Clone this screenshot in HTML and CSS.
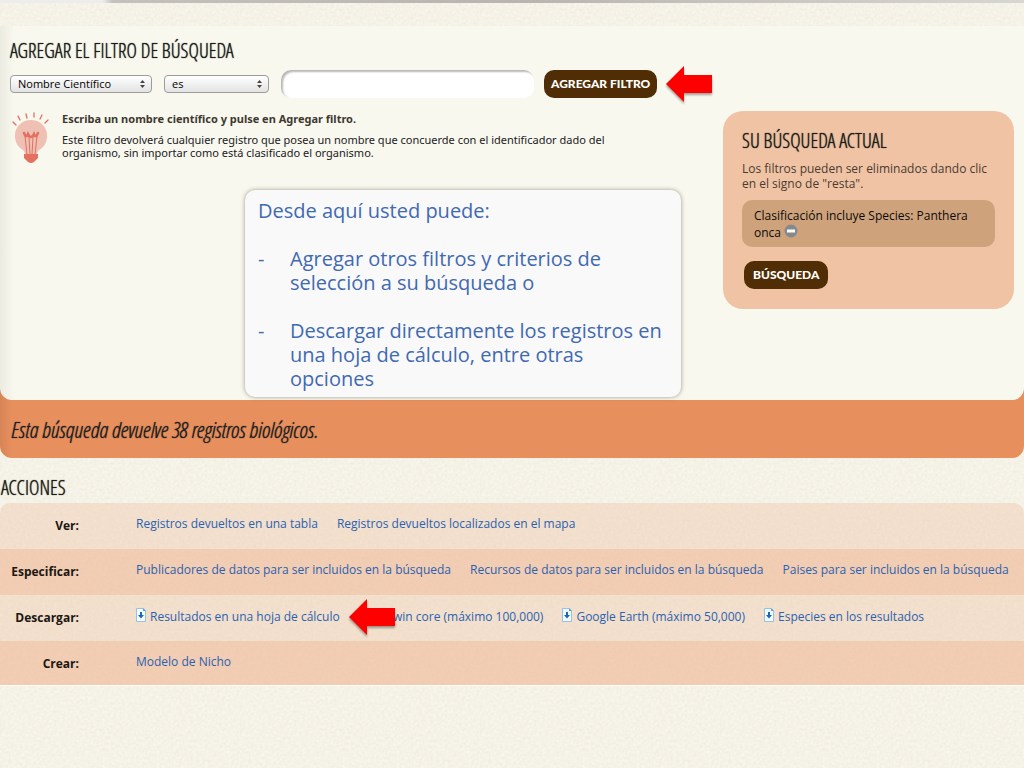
FILE: index.html
```html
<!DOCTYPE html>
<html lang="es">
<head>
<meta charset="utf-8">
<title>Agregar el filtro de búsqueda</title>
<link rel="stylesheet" href="styles.css">
</head>
<body>
<svg class="defs" aria-hidden="true">
  <symbol id="doc" viewBox="0 0 10 14">
    <path d="M.5 .5H7L9.500 3V13.500H.5Z" fill="#f4faff" stroke="#8fc3ea"/>
    <path d="M7 0V3H10Z" fill="#5b9fd6"/>
    <path d="M4 4H6V7H8L5 10.500L2 7H4Z" fill="#1b66b5"/>
  </symbol>
  <symbol id="arrow" viewBox="0 0 46 36">
    <path d="M0 18L18 0V9H46V27H18V36Z" fill="#fe0000"/>
  </symbol>
</svg>
<div class="strip"></div>
<main class="page">
  <div class="results">
    <section class="panel">
      <h2 class="title">AGREGAR EL FILTRO DE BÚSQUEDA</h2>
      <form class="filter">
        <select class="select select-field" aria-label="Campo"><option>Nombre Científico</option></select>
        <select class="select select-op" aria-label="Operador"><option>es</option></select>
        <input class="query" type="text" aria-label="Valor">
        <div class="submit">
          <button class="btn" type="button">AGREGAR FILTRO</button>
          <svg class="arrow arrow-filter" aria-hidden="true"><use href="#arrow"/></svg>
        </div>
      </form>
      <div class="body">
        <div class="tip">
          <svg class="bulb" viewBox="0 0 38 52" aria-hidden="true">
            <g stroke="#e4705f" stroke-width="1.300" stroke-linecap="round">
              <path d="M1 10L4 13M6 4L8 8M14 2L15 6M22 1V5M30 3L28 7M36 8L33 11"/>
            </g>
            <path d="M19 8a16 16 0 0 1 8 30q-2 2-2 4H13q0-2-2-4a16 16 0 0 1 8-30Z" fill="#efc0b4"/>
            <path d="M15 43L13 24M23 43L25 24M18 43L17 25M20 43L21 25" fill="none" stroke="#e4705f"/>
            <path d="M12 21q2 6 4 1q3 6 6 0q2 5 4-1" fill="none" stroke="#e4705f" stroke-width="2.500" stroke-linecap="round"/>
            <path d="M12 42H26V46L22 50Q19 52 16 50L12 46Z" fill="#e4705f"/>
          </svg>
          <div>
            <p class="lead">Escriba un nombre científico y pulse en Agregar filtro.</p>
            <p class="hint">Este filtro devolverá cualquier registro que posea un nombre que concuerde con el identificador dado del organismo, sin importar como está clasificado el organismo.</p>
          </div>
        </div>
        <aside class="current">
          <h2 class="title">SU BÚSQUEDA ACTUAL</h2>
          <p class="note">Los filtros pueden ser eliminados dando clic en el signo de "resta".</p>
          <div class="chip">Clasificación incluye Species: Panthera onca
            <button class="remove" type="button" aria-label="Quitar filtro"><svg viewBox="0 0 14 14"><circle cx="7" cy="7" r="6.500" fill="#85898b"/><path d="M3 5.500h8v3H3Z" fill="#fff"/></svg></button>
          </div>
          <button class="btn btn-search" type="button">BÚSQUEDA</button>
        </aside>
      </div>
      <div class="callout">
        <p>Desde aquí usted puede:</p>
        <ul class="callout-list">
          <li>Agregar otros filtros y criterios de selección a su búsqueda o</li>
          <li>Descargar directamente los registros en una hoja de cálculo, entre otras opciones</li>
        </ul>
      </div>
    </section>
    <p class="count">Esta búsqueda devuelve 38 registros biológicos.</p>
  </div>
  <section>
    <h2 class="title title-actions">ACCIONES</h2>
    <dl class="actions">
      <div class="row">
        <dt>Ver:</dt>
        <dd><a href="#">Registros devueltos en una tabla</a><a href="#">Registros devueltos localizados en el mapa</a></dd>
      </div>
      <div class="row">
        <dt>Especificar:</dt>
        <dd><a href="#">Publicadores de datos para ser incluidos en la búsqueda</a><a href="#">Recursos de datos para ser incluidos en la búsqueda</a><a href="#">Paises para ser incluidos en la búsqueda</a></dd>
      </div>
      <div class="row">
        <dt>Descargar:</dt>
        <dd>
          <a href="#"><svg class="doc"><use href="#doc"/></svg>Resultados en una hoja de cálculo</a>
          <a class="darwin" href="#"><svg class="doc"><use href="#doc"/></svg>Darwin core (máximo 100,000)<svg class="arrow arrow-sheet" aria-hidden="true"><use href="#arrow"/></svg></a>
          <a href="#"><svg class="doc"><use href="#doc"/></svg>Google Earth (máximo 50,000)</a>
          <a href="#"><svg class="doc"><use href="#doc"/></svg>Especies en los resultados</a>
        </dd>
      </div>
      <div class="row">
        <dt>Crear:</dt>
        <dd><a href="#">Modelo de Nicho</a></dd>
      </div>
    </dl>
  </section>
</main>
</body>
</html>
```
FILE: styles.css
```css
* { box-sizing: border-box; }

body {
  margin: 0;
  min-height: 100vh;
  background-color: #f8f5eb;
  background-image: url("data:image/svg+xml,%3Csvg xmlns='http://www.w3.org/2000/svg' width='240' height='240'%3E%3Cfilter id='n'%3E%3CfeTurbulence type='fractalNoise' baseFrequency='.35' numOctaves='3' stitchTiles='stitch'/%3E%3CfeColorMatrix values='0 0 0 0 .5 0 0 0 0 .45 0 0 0 0 .3 .22 0 0 0 -.06'/%3E%3C/filter%3E%3Crect width='240' height='240' filter='url(%23n)'/%3E%3C/svg%3E");
  color: #222;
  font: 12px/16px "Open Sans", "Noto Sans", sans-serif;
}

h2, p, dl, dd, ul { margin: 0; padding: 0; }

.defs { position: absolute; width: 0; height: 0; }

.strip {
  height: 3px;
  background: linear-gradient(90deg, #ededed 10%, #c4c1bd 11%, #b9b4b0 50%, #d8d6d2);
}

.page { padding-top: 23px; }

.title {
  color: #1c1c18;
  font: 300 20px/24px "Open Sans Condensed Light", "Liberation Sans Narrow", "DejaVu Sans Condensed", sans-serif;
  text-shadow: 0 0 1px #1c1c18;
}

.results {
  border-radius: 0 0 12px 12px;
  background: linear-gradient(90deg, rgba(90, 60, 30, .12), transparent 12px) #e88f5e;
}

.panel {
  position: relative;
  min-height: 374px;
  padding: 13px 10px 0;
  border-radius: 0 0 12px 12px;
  background: linear-gradient(90deg, #ebebe2, #f8f8ef 14px);
}

.filter {
  display: flex;
  align-items: center;
  gap: 12px;
  margin-top: 7px;
}

.select {
  height: 18px;
  padding: 0 7px;
  appearance: none;
  border: 1px solid #9c9c9a;
  border-radius: 4px;
  background: url("data:image/svg+xml,%3Csvg xmlns='http://www.w3.org/2000/svg' width='5' height='8'%3E%3Cpath d='M0 3L2.500 0L5 3ZM0 5L2.500 8L5 5Z' fill='%23444'/%3E%3C/svg%3E") no-repeat right 6px center, linear-gradient(#fff, #e3e3e3);
  color: #000;
  font: 500 11px/16px "Open Sans", sans-serif;
}

.select-field { width: 142px; }
.select-op { width: 105px; }

.query {
  width: 253px;
  height: 28px;
  padding: 0 12px;
  border: 0;
  border-radius: 10px;
  background: #fff;
  box-shadow: inset 2px 2px 2px #b8b8b6;
  font: inherit;
}

.submit { position: relative; margin-left: -2px; }

.btn {
  height: 28px;
  padding: 0 7px;
  border: 0;
  border-radius: 10px;
  background: #502d04;
  color: #fff;
  font: 900 12px/16px Lato, "Open Sans", sans-serif;
}

.arrow {
  position: absolute;
  width: 46px;
  height: 36px;
  filter: drop-shadow(0 2px 1px rgba(0, 0, 0, .35));
}

.arrow-filter { top: -4px; left: calc(100% + 9px); }

.body {
  display: flex;
  justify-content: space-between;
  align-items: flex-start;
  margin-top: 13px;
}

.tip {
  display: flex;
  gap: 12px;
  max-width: 620px;
  padding-left: 2px;
}

.bulb { flex: none; width: 38px; height: 52px; margin-top: 1px; }

.lead { color: #403830; font: 700 11px/15px "Noto Sans", "Open Sans", sans-serif; }
.hint { margin-top: 7px; color: #22201c; font: 11px/13px "Noto Sans", "Open Sans", sans-serif; }

.current {
  width: 291px;
  padding: 18px 19px 20px;
  border-radius: 20px;
  background: #f0c3a5;
}

.note { margin-top: 8px; color: #4a3c30; line-height: 15px; }

.chip {
  margin-top: 9px;
  padding: 7px 12px 6px;
  border-radius: 10px;
  background: #cea37c;
  color: #0c0a08;
  line-height: 17px;
}

.remove {
  width: 14px;
  height: 14px;
  padding: 0;
  border: 0;
  background: none;
  vertical-align: -1px;
}

.remove svg { display: block; }

.btn-search { margin: 14px 2px 0; padding: 0 9px; }

.callout {
  position: absolute;
  top: 164px;
  left: 245px;
  width: 436px;
  padding: 9px 13px 6px;
  border-radius: 10px;
  background: #f9f9f9;
  box-shadow: 0 0 4px rgba(90, 90, 70, .6);
  color: #4169b2;
  font-size: 20px;
  line-height: 24px;
}

.callout-list { list-style: none; }
.callout-list li { display: flex; margin-top: 24px; }
.callout-list li::before { content: "-"; flex: none; width: 32px; }

.count {
  padding: 17px 11px;
  color: #1e1e1e;
  font: italic 300 22px/24px "Open Sans Condensed Light", "Liberation Sans Narrow", "DejaVu Sans Condensed", sans-serif;
  text-shadow: 0 0 1px #1e1e1e;
}

.title-actions { padding: 18px 1px 3px; }

.actions {
  border-bottom: 1px solid #fffdf8;
  border-radius: 10px 10px 0 0;
  overflow: hidden;
}

.row {
  display: flex;
  min-height: 46px;
  padding-top: 13px;
  background: rgba(238, 195, 165, .4);
}

.row:nth-child(even) { background: rgba(238, 180, 145, .6); }
.row:last-child { min-height: 44px; }

dt {
  width: 79px;
  padding-top: 2px;
  color: #1c1713;
  font-weight: 700;
  text-align: right;
}

dd {
  display: flex;
  flex-wrap: wrap;
  gap: 0 19px;
  margin-left: 57px;
}

dd a { color: #2a62b0; text-decoration: none; }

.doc { width: 10px; height: 14px; margin-right: 4px; vertical-align: -1px; }

.darwin { position: relative; }
.arrow-sheet { top: -9px; left: -10px; }
```
